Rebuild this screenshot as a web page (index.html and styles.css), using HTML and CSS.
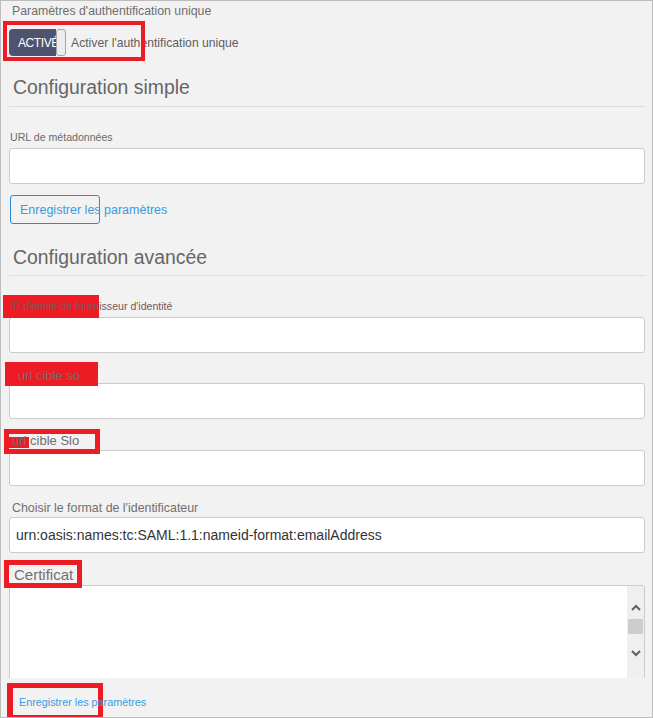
FILE: index.html
```html
<!DOCTYPE html>
<html lang="fr">
<head>
<meta charset="utf-8">
<title>Paramètres d'authentification unique</title>
<link rel="stylesheet" href="styles.css">
</head>
<body>
<div class="page">
  <div class="section-title">Paramètres d'authentification unique</div>
  <div class="toggle-row">
    <div class="toggle">
      <span class="track"><span class="toggle-text">ACTIVÉ</span></span>
      <span class="knob"></span>
    </div>
    <span class="toggle-label">Activer l'authentification unique</span>
  </div>

  <h2 class="heading heading-simple">Configuration simple</h2>
  <hr class="rule">
  <label class="field-label lbl-url">URL de métadonnées</label>
  <div class="input"></div>
  <button class="btn-save" type="button">Enregistrer les paramètres</button>

  <h2 class="heading heading-adv">Configuration avancée</h2>
  <hr class="rule">
  <label class="field-label lbl-id">ID d'entité de fournisseur d'identité</label>
  <div class="input"></div>
  <label class="field-label lbl-sso">url cible so</label>
  <div class="input"></div>
  <label class="field-label lbl-slo">url cible Slo</label>
  <div class="input"></div>
  <label class="field-label lbl-format">Choisir le format de l'identificateur</label>
  <div class="input select">urn:oasis:names:tc:SAML:1.1:nameid-format:emailAddress</div>
  <label class="field-label lbl-cert">Certificat</label>
  <div class="textarea">
    <div class="textarea-body"></div>
    <div class="scrollbar">
      <svg class="chev chev-up" width="10" height="7" viewBox="0 0 10 7"><path d="M1 6 L5 2 L9 6" fill="none" stroke="#5f5f5f" stroke-width="2"/></svg>
      <div class="thumb"></div>
      <svg class="chev chev-down" width="10" height="7" viewBox="0 0 10 7"><path d="M1 1 L5 5 L9 1" fill="none" stroke="#5f5f5f" stroke-width="2"/></svg>
    </div>
  </div>
  <a class="save-link" href="#">Enregistrer les paramètres</a>

  <div class="mark mark-toggle"></div>
  <div class="mark-fill mark-id"></div>
  <div class="mark-fill mark-sso"></div>
  <div class="mark mark-slo"></div>
  <div class="mark-fill mark-slo-fill"></div>
  <div class="mark mark-cert"></div>
  <div class="mark mark-save"></div>
</div>
</body>
</html>
```

FILE: styles.css
```css
* { box-sizing: border-box; }
html, body { margin: 0; padding: 0; background: #f2f2f2; }
body { font-family: "Liberation Sans", Arial, sans-serif; }

.page {
  position: relative;
  width: 653px;
  height: 718px;
  overflow: hidden;
  background: #f2f2f2;
  border: 1px solid #bdbdbd;
  padding: 0 7px 0 8px;
  display: flex;
  flex-direction: column;
  align-items: stretch;
}

.section-title {
  margin-top: 3px;
  padding-left: 3px;
  font-size: 12.3px;
  line-height: 15px;
  color: #6f6f6f;
}

.toggle-row {
  display: flex;
  align-items: center;
  margin-top: 10px;
  height: 27px;
}
.toggle { display: flex; height: 27px; }
.track {
  width: 47px;
  height: 27px;
  background: #4f536f;
  border-radius: 4px 0 0 4px;
  padding-left: 9px;
  display: flex;
  align-items: center;
  overflow: visible;
  white-space: nowrap;
}
.toggle-text { color: #fff; font-size: 12px; letter-spacing: -0.4px; }
.knob {
  position: relative;
  z-index: 1;
  width: 10px;
  height: 27px;
  background: #ececec;
  border: 1px solid #a5a5a5;
  border-radius: 3px;
}
.toggle-label {
  margin-left: 5px;
  font-size: 12.2px;
  color: #5e5e5e;
}

.heading {
  margin: 0;
  font-size: 19.4px;
  line-height: 22px;
  font-weight: normal;
  color: #666;
  padding-left: 4px;
}
.heading-simple { margin-top: 20px; }
.heading-adv { margin-top: 22px; }

.rule {
  margin: 7px 0 0 0;
  border: 0;
  border-top: 1px solid #dcdcdc;
  height: 0;
}
.heading-simple + .rule { margin-top: 8px; }

.field-label {
  position: relative;
  z-index: 2;
  display: block;
  font-size: 10.6px;
  line-height: 14px;
  color: #6a6a6a;
  white-space: nowrap;
}
.lbl-url { margin-top: 23px; margin-bottom: 4px; padding-left: 1px; }
.lbl-id { margin-top: 23px; margin-bottom: 4px; padding-left: 1px; color: #7a5658; }
.lbl-sso { margin-top: 15px; font-size: 13px; line-height: 15px; padding-left: 9px; color: #6d6d6d; }
.lbl-slo { margin-top: 14px; margin-bottom: 2px; font-size: 13px; line-height: 15px; padding-left: 3px; color: #6d6d6d; }
.lbl-format { margin-top: 15px; margin-bottom: 2px; font-size: 12.4px; line-height: 14px; padding-left: 3px; color: #707070; }
.lbl-cert { margin-top: 13px; margin-bottom: 1px; font-size: 15px; line-height: 18px; padding-left: 5px; color: #707070; }

.input {
  height: 36px;
  background: #fff;
  border: 1px solid #cbcbcb;
  border-radius: 3px;
}
.select {
  display: flex;
  align-items: center;
  padding-left: 6px;
  font-size: 14px;
  color: #333;
  white-space: nowrap;
}

.btn-save {
  margin-top: 11px;
  width: 90px;
  height: 29px;
  padding: 0 0 0 9px;
  border: 1px solid #2a8ad8;
  border-radius: 3px;
  background: transparent;
  font-family: "Liberation Sans", Arial, sans-serif;
  font-size: 12.5px;
  color: #3a9be0;
  text-align: left;
  white-space: nowrap;
  overflow: visible;
  align-self: flex-start;
  margin-left: 1px;
}

.textarea {
  height: 93px;
  display: flex;
  background: #fff;
  border: 1px solid #cbcbcb;
  border-bottom: 0;
  border-radius: 3px 3px 0 0;
}
.textarea-body { flex: 1; }
.scrollbar {
  width: 17px;
  background: #efefef;
  display: flex;
  flex-direction: column;
  align-items: center;
  padding-top: 18px;
}
.chev { display: block; }
.thumb {
  width: 15px;
  height: 15px;
  margin-top: 8px;
  background: #cdcdcd;
}
.chev-down { margin-top: 16px; }

.save-link {
  position: relative;
  z-index: 2;
  margin-top: 18px;
  padding-left: 10px;
  font-size: 10.8px;
  line-height: 13px;
  color: #3a9be0;
  text-decoration: none;
  white-space: nowrap;
}

/* annotation overlays */
.mark, .mark-fill { position: absolute; z-index: 1; }
.mark { border: 5px solid #ed1c24; }
.mark-fill { background: #ed1c24; }
.mark-toggle { left: 2px; top: 20px; width: 142px; height: 40px; border-width: 4px; }
.mark-id { left: 2px; top: 294px; width: 96px; height: 23px; }
.mark-sso { left: 4px; top: 361px; width: 93px; height: 24px; }
.mark-slo { left: 3px; top: 428px; width: 96px; height: 25px; }
.mark-slo-fill { left: 8px; top: 436px; width: 20px; height: 11px; z-index: 1; }
.mark-cert { left: 3px; top: 559px; width: 78px; height: 28px; }
.mark-save { left: 6px; top: 682px; width: 96px; height: 36px; border-width: 5px 5px 4px 6px; }
```
